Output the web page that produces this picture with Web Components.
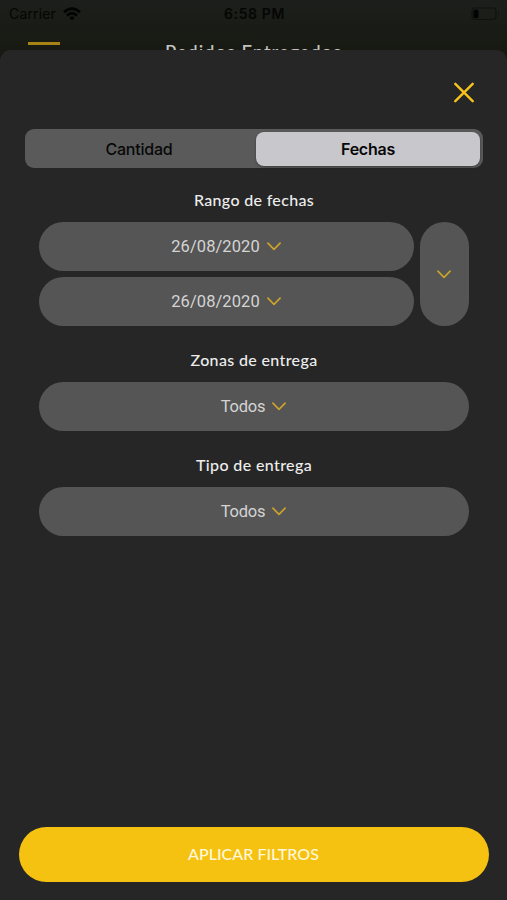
<!DOCTYPE html>
<html lang="es">
<head>
<meta charset="utf-8">
<title>Filtros</title>
<style>
html, body { margin: 0; height: 100%; }
body { background: #181a15; overflow: hidden; }
</style>
</head>
<body>
<filter-screen></filter-screen>
<script>
const define = (name, html, setup) => {
  const template = document.createElement('template');
  template.innerHTML = html;
  customElements.define(name, class extends HTMLElement {
    constructor() {
      super();
      this.attachShadow({ mode: 'open' }).append(template.content.cloneNode(true));
    }
    connectedCallback() { if (setup) setup(this); }
  });
};

/* One line of text, tracked so that it spans the width given in pixels. */
define('fit-text', `
<style>
:host { display: inline-block; white-space: nowrap; line-height: 20px; }
span { display: inline-block; }
</style><span></span>`, el => {
  const span = el.shadowRoot.querySelector('span');
  const text = el.getAttribute('text');
  span.textContent = text;
  const width = +el.getAttribute('width');
  const spacing = (width - span.getBoundingClientRect().width) / text.length;
  span.style.letterSpacing = spacing.toFixed(3) + 'px';
});

define('chevron-icon', `
<style>:host { display: block; width: 14px; height: 9px; } svg { display: block; }</style>
<svg width="14" height="9" viewBox="0 0 14 9" fill="none" stroke="#cda42b" stroke-width="1.6" stroke-linecap="round" stroke-linejoin="round"><path d="M.9 1.1 7 7.4l6.1-6.3"/></svg>`);

define('status-bar', `
<style>
:host { display: grid; grid-template-columns: 1fr auto 1fr; align-items: center; height: 28px; padding: 0 7px 0 9px; color: #050604; font-family: Inter, "Liberation Sans", sans-serif; font-size: 14px; }
.left { display: flex; align-items: center; gap: 7px; }
.time { font-weight: 600; }
.battery { justify-self: end; }
svg { display: block; }
</style>
<div class="left"><fit-text text="Carrier" width="47"></fit-text>
<svg width="18" height="14" viewBox="0 0 18 14" fill="none" stroke="#020302" stroke-width="2.7"><path d="M1 5.2Q9-1.9 17 5.2M4 8.4q5-4.3 10 0"/><path d="M9 13.3 6.3 10.7q2.7-2.2 5.4 0z" fill="#020302" stroke="none"/></svg></div>
<fit-text class="time" text="6:58 PM" width="61"></fit-text>
<svg class="battery" width="29" height="14" viewBox="0 0 29 14"><rect x="1" y="1" width="24" height="11.5" rx="3" fill="none" stroke="#10120f" stroke-width="1.2"/><rect x="2.5" y="2.5" width="5" height="8.7" rx="2" fill="#020302"/><path d="M27 4.8q2 1.8 0 4z" fill="#10120f"/></svg>`);

define('nav-bar', `
<style>
:host { display: grid; grid-template-columns: 1fr auto 1fr; height: 22px; color: #c2c3c0; font: 500 18.5px Lato, sans-serif; }
i { width: 32px; height: 3px; margin: 14px 0 0 28px; background: #a58213; }
fit-text { margin-top: 14px; }
</style>
<i></i><fit-text text="Pedidos Entregados" width="177"></fit-text><span></span>`);

define('segmented-control', `
<style>
:host { display: grid; grid-template-columns: 1fr 224px; height: 39px; box-sizing: border-box; margin: 0 24px 0 25px; padding: 3px 3px 2px; border-radius: 9px; background: #5a5a5a; color: #080808; font: 500 16px Inter, sans-serif; }
div { display: flex; align-items: center; justify-content: center; }
.off { padding-right: 6px; }
.on { background: #c8c7cc; border-radius: 8px; font-weight: 600; box-shadow: 0 1px 3px #0005; }
</style>
<div class="off"><fit-text text="Cantidad" width="67"></fit-text></div><div class="on"><fit-text text="Fechas" width="54"></fit-text></div>`);

define('select-pill', `
<style>
:host { display: flex; align-items: center; justify-content: center; gap: 7px; height: 49px; box-sizing: border-box; padding-right: 1px; border-radius: 24.5px; background: #555; color: #d4d4d4; font: 400 16.5px Roboto, sans-serif; }
</style><slot></slot><chevron-icon></chevron-icon>`);

define('field-label', `
<style>:host { display: flex; justify-content: center; height: 20px; color: #ededed; font: 500 16px Lato, sans-serif; }</style><slot></slot>`);

define('filter-sheet', `
<style>
:host { display: flex; flex-direction: column; position: relative; height: 850px; background: #262626; border-radius: 11px 11px 0 0; box-sizing: border-box; }
.close { align-self: flex-end; margin: 32px 32px 0 0; width: 21px; height: 21px; }
segmented-control { margin-top: 26px; }
.fields { margin: 22px 38px 0 39px; }
.dates { display: grid; grid-template-columns: 375px 1fr; column-gap: 6px; row-gap: 6px; margin: 12px 0 24px; }
.tall { grid-column: 2; grid-row: 1 / 3; height: auto; }
.zone { margin: 12px 0 24px; }
.type { margin-top: 12px; }
</style>
<svg class="close" viewBox="0 0 21 21" stroke="#f6c21b" stroke-width="2.4" stroke-linecap="round"><path d="M1.3 1.8 18.7 19.2M18.7 1.8 1.3 19.2"/></svg>
<segmented-control></segmented-control>
<div class="fields">
<field-label><fit-text text="Rango de fechas" width="120"></fit-text></field-label>
<div class="dates">
<select-pill><fit-text text="26/08/2020" width="88.5"></fit-text></select-pill>
<select-pill class="tall"></select-pill>
<select-pill><fit-text text="26/08/2020" width="88.5"></fit-text></select-pill>
</div>
<field-label><fit-text text="Zonas de entrega" width="127"></fit-text></field-label>
<select-pill class="zone"><fit-text text="Todos" width="44.5"></fit-text></select-pill>
<field-label><fit-text text="Tipo de entrega" width="116"></fit-text></field-label>
<select-pill class="type"><fit-text text="Todos" width="44.5"></fit-text></select-pill>
</div>
<slot></slot>`);

define('apply-button', `
<style>:host { display: flex; align-items: center; justify-content: center; height: 55px; box-sizing: border-box; margin: auto 18px 18px 19px; padding: 0 1px 2px 0; border-radius: 27.5px; background: #f6c212; color: #fff8dc; font: 500 16px Lato, sans-serif; }</style>
<fit-text text="APLICAR FILTROS" width="131"></fit-text>`);

define('filter-screen', `
<style>:host { display: block; width: 507px; height: 900px; overflow: hidden; background: linear-gradient(#1c1f1b, #171912 50px); }</style>
<status-bar></status-bar><nav-bar></nav-bar>
<filter-sheet><apply-button></apply-button></filter-sheet>`);
</script>
</body>
</html>
